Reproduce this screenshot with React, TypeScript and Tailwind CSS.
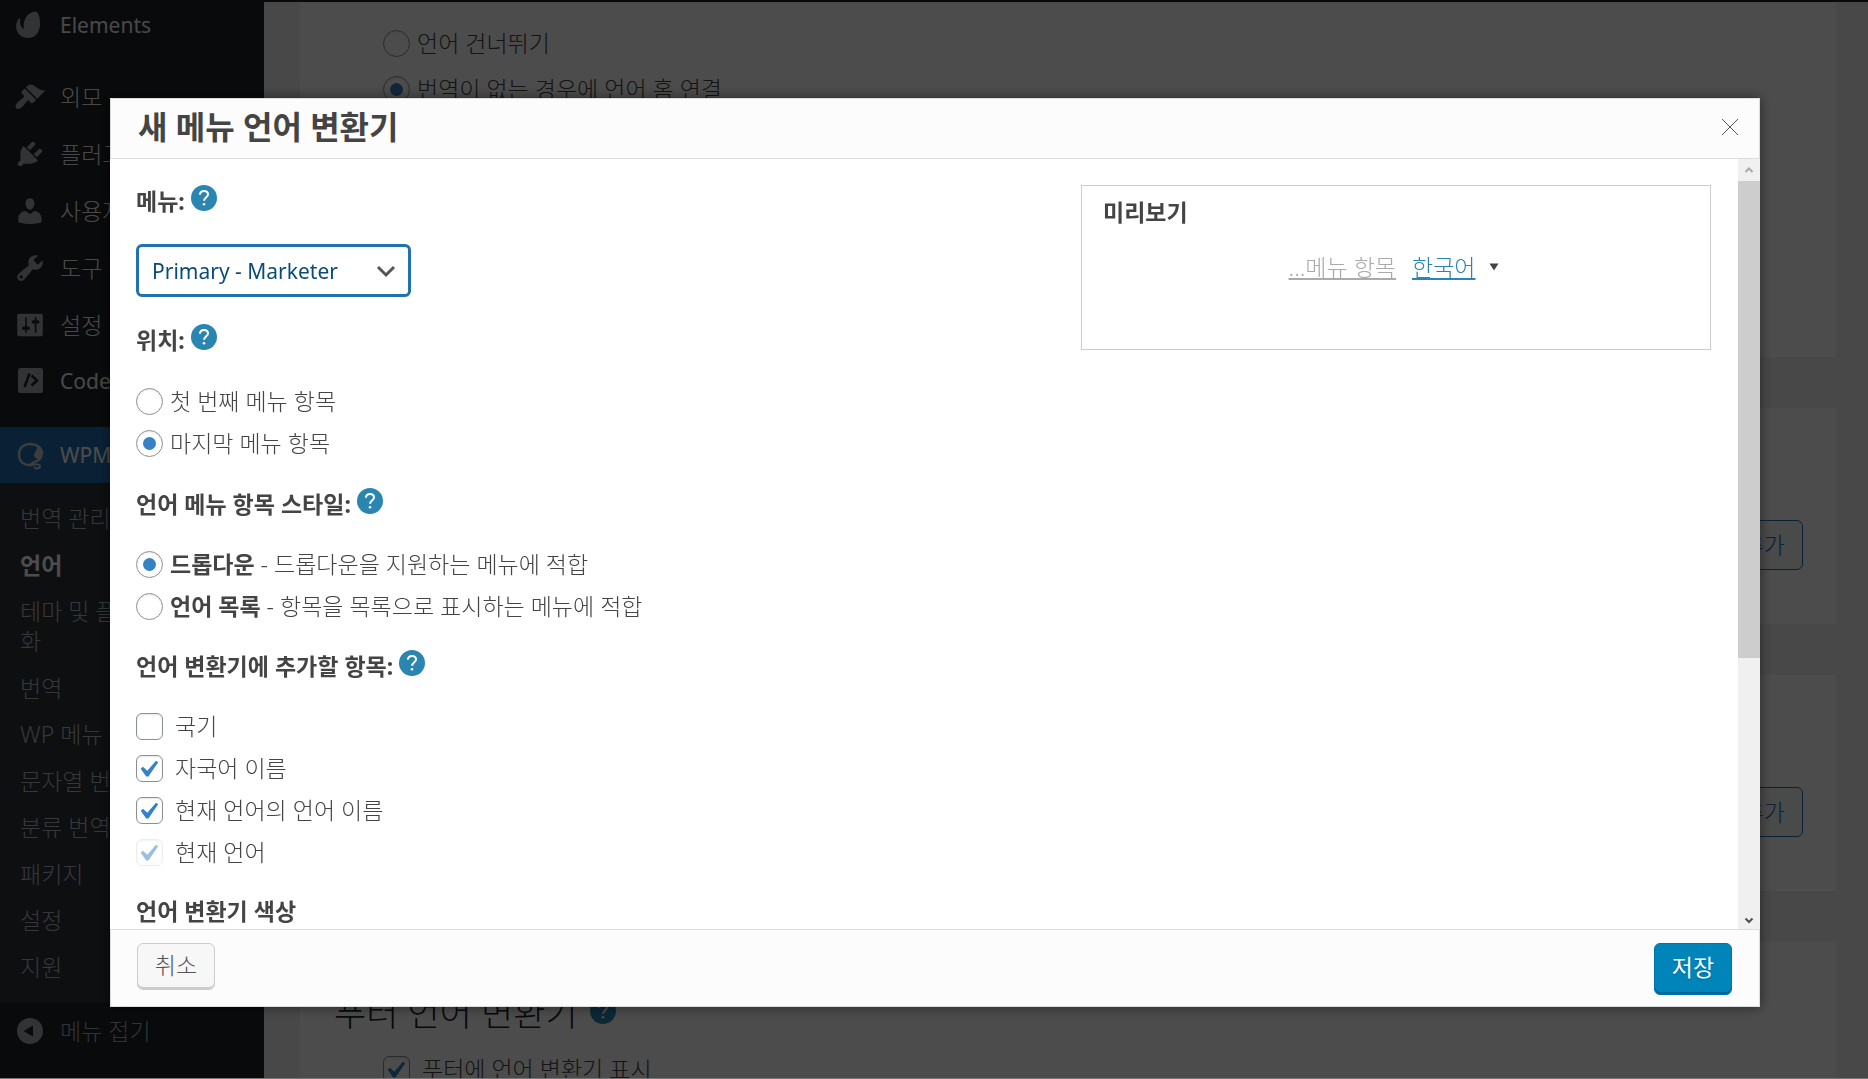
import { useState } from 'react';
import type { ReactNode } from 'react';

const icons = {
  appearance:
    'M14.48 11.06L7.41 3.99l1.5-1.5c.5-.56 2.3-.47 3.51.32 1.21.8 1.43 1.28 2.91 2.1 1.18.64 2.45 1.26 4.45.85zm-.71.71L6.7 4.7 4.93 6.47c-.39.39-.39 1.02 0 1.41l1.06 1.06c.39.39.39 1.03 0 1.42-.6.6-1.43 1.11-2.21 1.69-.35.26-.7.53-1.01.84C1.43 14.23.4 16.08 1.4 17.07c.99 1 2.84-.03 4.18-1.36.31-.31.58-.66.85-1.02.57-.78 1.08-1.61 1.69-2.21.39-.39 1.02-.39 1.41 0l1.06 1.06c.39.39 1.02.39 1.41 0z',
  plugins:
    'M13.11 4.36L9.87 7.6 8 5.73l3.24-3.24c.35-.34 1.05-.2 1.56.32.52.51.66 1.21.31 1.55zm-8 1.77l.91-1.12 9.01 9.01-1.19.84c-.71.71-2.63 1.16-3.82 1.16H6.14L4.9 17.26c-.59.59-1.54.59-2.12 0-.59-.58-.59-1.53 0-2.12l1.24-1.24v-3.88c0-1.13.4-3.19 1.09-3.89zm7.26 3.97l3.24-3.24c.34-.35 1.04-.21 1.55.31.52.51.66 1.21.31 1.55l-3.24 3.25z',
  users:
    'M10 9.25c-2.27 0-2.73-3.44-2.73-3.44C7 4.02 7.82 2 9.97 2c2.16 0 2.98 2.02 2.71 3.81 0 0-.41 3.44-2.68 3.44zm0 2.57L12.72 10c2.39 0 4.52 2.33 4.52 4.53v2.49s-3.65 1.13-7.24 1.13c-3.65 0-7.24-1.13-7.24-1.13v-2.49c0-2.25 1.94-4.48 4.47-4.48z',
  tools:
    'M16.68 9.77c-1.34 1.34-3.3 1.67-4.95.99l-5.41 6.52c-.99.99-2.59.99-3.58 0s-.99-2.59 0-3.57l6.52-5.42c-.68-1.65-.35-3.61.99-4.95 1.28-1.28 3.12-1.62 4.72-1.06l-2.89 2.89 2.82 2.82 2.86-2.87c.53 1.58.18 3.39-1.08 4.65zM3.81 16.21c.4.39 1.04.39 1.43 0 .4-.4.4-1.04 0-1.43-.39-.4-1.03-.4-1.43 0-.39.39-.39 1.03 0 1.43z',
  settings:
    'M18 16V4c0-.55-.45-1-1-1H3c-.55 0-1 .45-1 1v12c0 .55.45 1 1 1h14c.55 0 1-.45 1-1zM8 11h1c.55 0 1 .45 1 1s-.45 1-1 1H8v1.5c0 .28-.22.5-.5.5s-.5-.22-.5-.5V13H6c-.55 0-1-.45-1-1s.45-1 1-1h1V5.5c0-.28.22-.5.5-.5s.5.22.5.5V11zm5-2h-1c-.55 0-1-.45-1-1s.45-1 1-1h1V5.5c0-.28.22-.5.5-.5s.5.22.5.5V7h1c.55 0 1 .45 1 1s-.45 1-1 1h-1v5.5c0 .28-.22.5-.5.5s-.5-.22-.5-.5V9z',
};

const menuItems = [
  { label: '외모', icon: icons.appearance },
  { label: '플러그인', icon: icons.plugins },
  { label: '사용자', icon: icons.users },
  { label: '도구', icon: icons.tools },
  { label: '설정', icon: icons.settings },
];

const subItems = ['번역', 'WP 메뉴 동기화', '문자열 번역', '분류 번역', '패키지', '설정', '지원'];

const DashIcon = ({ d }: { d: string }) => (
  <svg viewBox="0 0 20 20" className="size-8 shrink-0 fill-[#a7aaad]">
    <path d={d} />
  </svg>
);

const Sidebar = () => (
  <nav className="w-[264px] shrink-0 bg-[#1d2327] text-[23px] leading-[30px] whitespace-nowrap">
    <a href="#" className="flex h-[46px] items-center gap-[14px] pl-[14px] text-[21px] font-normal text-[#f0f0f1]">
      <svg viewBox="0 0 32 32" className="size-8 shrink-0 fill-[#a7aaad]">
        <path d="M21.5 2.4C24 2.4 26.4 8 26 15.500C25.600 23.500 21.500 29 14.500 29C8 29 3.200 25 2.300 19.500C1.700 15.800 3.100 11.500 5 9.600C6 9 6.500 9.500 6.100 10.600C5.400 14 6.500 17.500 8.900 19.500C9.500 20 9.900 19.600 9.800 18.900C8.800 10.500 13.500 3.200 21.500 2.400Z" />
      </svg>
      <span>Elements</span>
    </a>
    <div className="mt-5">
      {menuItems.map((item) => (
        <a key={item.label} href="#" className="flex h-[57px] items-center gap-[14px] pl-[14px] text-[#f0f0f1]">
          <DashIcon d={item.icon} />
          <span>{item.label}</span>
        </a>
      ))}
      <a href="#" className="flex h-[55px] items-center gap-[14px] pl-[14px] text-[21px] font-normal text-[#f0f0f1]">
        <svg viewBox="0 0 32 32" className="size-8 shrink-0">
          <rect x="4" y="3" width="25" height="25" rx="2.500" className="fill-[#a7aaad]" />
          <path d="M15.500 8.500l-5 13.500M17.500 10.500l5.500 5-5.500 5" className="fill-none stroke-[#1d2327] stroke-[2.500]" />
        </svg>
        <span>Code Snippets</span>
      </a>
    </div>
    <a href="#" className="mt-[19px] flex h-14 items-center gap-[14px] bg-[#2271b1] pl-[14px] text-[21px] font-normal text-white">
      <svg viewBox="0 0 32 32" className="size-8 shrink-0 fill-none stroke-[#c8ccd0]">
        <path d="M19.500 25.500C10 28 5 22 5 15.500C5 8.500 10 5 16 5C22.500 5 28 8.500 28.200 15" className="stroke-[2.500]" />
        <path d="M23.500 8C27.500 9.500 29 13.500 28 17.500C26.500 21 20.500 20 20.500 16C20.500 13 23.500 12 23.500 8Z" className="fill-[#c8ccd0]" />
        <path d="M27 18.500C25 23 18 22.500 17.500 24.500C18 26.500 25 23.500 26 27C26 30 20.500 30.500 20.500 27.500" className="stroke-2" />
      </svg>
      <span>WPML</span>
    </a>
    <div className="bg-[#2c3338] pt-5 pb-[21px]">
      <ul className="flex h-[479px] flex-col justify-between pl-[20px] text-[#b5bac0]">
        <li>
          <a href="#">번역 관리</a>
        </li>
        <li>
          <a href="#" className="font-bold text-white">
            언어
          </a>
        </li>
        <li>
          <a href="#">
            테마 및 플러그인 현지
            <br />화
          </a>
        </li>
        {subItems.map((label) => (
          <li key={label}>
            <a href="#">{label}</a>
          </li>
        ))}
      </ul>
    </div>
    <button type="button" className="flex h-[55px] w-full items-center gap-[14px] pl-[14px] text-[#a7aaad]">
      <svg viewBox="0 0 32 32" className="size-8 shrink-0">
        <circle cx="16" cy="16" r="13" className="fill-[#a7aaad]" />
        <path d="M19 10.500v11L9.500 16z" className="fill-[#1d2327]" />
      </svg>
      <span>메뉴 접기</span>
    </button>
  </nav>
);

const HelpIcon = () => (
  <svg viewBox="0 0 26 26" className="size-[26px] shrink-0">
    <circle cx="13" cy="13" r="13" className="fill-[#2a85b0]" />
    <path d="M8.900 9.800C9 7.200 10.700 5.900 13 5.900C15.400 5.900 17 7.300 17 9.400C17 12.200 13.300 12.400 13.100 15.800" className="fill-none stroke-white stroke-2" />
    <circle cx="13" cy="19.200" r="1.300" className="fill-white" />
  </svg>
);

interface ChoiceProps {
  children: ReactNode;
  name?: string;
  defaultChecked?: boolean;
  disabled?: boolean;
}

const Radio = ({ children, name, defaultChecked }: ChoiceProps) => (
  <label className="flex h-[42px] w-fit items-center gap-[7px]">
    <input
      type="radio"
      name={name}
      defaultChecked={defaultChecked}
      className="grid size-[27px] shrink-0 appearance-none place-items-center rounded-full border border-[#8c8f94] bg-white shadow-[inset_0_1px_2px_rgba(0,0,0,0.1)] before:size-[13px] before:rounded-full checked:before:bg-[#3582c4]"
    />
    <span>{children}</span>
  </label>
);

const Checkbox = ({ children, defaultChecked, disabled }: ChoiceProps) => (
  <label className="flex h-[42px] w-fit items-center gap-3">
    <span className={disabled ? 'grid shrink-0 opacity-50' : 'grid shrink-0'}>
      <input
        type="checkbox"
        defaultChecked={defaultChecked}
        disabled={disabled}
        className="peer col-start-1 row-start-1 size-[27px] appearance-none rounded-md border border-[#8c8f94] bg-white shadow-[inset_0_1px_2px_rgba(0,0,0,0.1)] disabled:border-[#dcdcde]"
      />
      <svg viewBox="3 1.5 16 16" className="pointer-events-none invisible col-start-1 row-start-1 size-[27px] fill-[#3582c4] peer-checked:visible">
        <path d="M14.830 4.890l1.340.940-5.810 8.380H9.020L5.780 9.670l1.340-1.250 2.570 2.400z" />
      </svg>
    </span>
    <span>{children}</span>
  </label>
);

const SectionTitle = ({ children, help = true }: { children: ReactNode; help?: boolean }) => (
  <div className="flex h-8 gap-[6px]">
    <h3 className="pt-[1px] leading-[30px] font-bold">{children}</h3>
    {help && (
      <button type="button" aria-label="도움말" className="self-start">
        <HelpIcon />
      </button>
    )}
  </div>
);

const AddCard = () => (
  <section className="flex h-[216px] shrink-0 items-end justify-end bg-white pr-[33px] pb-[54px]">
    <button type="button" className="h-[50px] rounded-md border border-[#2271b1] bg-[#f6f7f7] px-[17px] text-[#2271b1]">
      새 언어 변환기 추가
    </button>
  </section>
);

const Background = () => (
  <main className="flex min-w-0 flex-1 flex-col gap-[51px] overflow-hidden bg-[#f0f0f1] pr-8 pl-9">
    <section className="h-[355px] shrink-0 bg-white pt-5 pl-[83px]">
      <Radio name="missing">언어 건너뛰기</Radio>
      <div className="mt-1">
        <Radio name="missing" defaultChecked>
          번역이 없는 경우에 언어 홈 연결
        </Radio>
      </div>
    </section>
    <AddCard />
    <AddCard />
    <section className="h-[240px] shrink-0 bg-white pt-[48px] pl-[34px]">
      <div className="flex gap-3">
        <h2 className="text-[35px] leading-[46px] text-[#1d2327]">푸터 언어 변환기</h2>
        <span className="pt-2">
          <HelpIcon />
        </span>
      </div>
      <div className="mt-3 pl-[49px]">
        <Checkbox defaultChecked>푸터에 언어 변환기 표시</Checkbox>
      </div>
    </section>
  </main>
);

const ScrollTrack = () => (
  <div className="flex w-[22px] shrink-0 flex-col bg-[#f0f0f0]">
    <div className="grid h-[22px] place-items-center">
      <svg viewBox="0 0 10 10" className="size-[10px] fill-none stroke-[#a8a8a8] stroke-2">
        <path d="M1.500 7L5 3.500L8.500 7" />
      </svg>
    </div>
    <div className="h-[62%] bg-[#cdcdcd]" />
    <div className="mt-auto grid h-[18px] place-items-center">
      <svg viewBox="0 0 10 10" className="size-[10px] fill-none stroke-[#505050] stroke-2">
        <path d="M1.500 3.500L5 7L8.500 3.500" />
      </svg>
    </div>
  </div>
);

const SwitcherDialog = ({ onClose }: { onClose: () => void }) => (
  <div role="dialog" aria-labelledby="dialog-title" className="flex min-w-0 flex-1 flex-col bg-white shadow-[0_0_12px_rgba(0,0,0,0.5)]">
    <header className="flex h-[61px] shrink-0 items-center justify-between border border-[#dddddd] bg-[#fcfcfc] pr-[20px] pb-[3px] pl-[27px]">
      <h2 id="dialog-title" className="text-[32px] leading-[44px] font-bold">
        새 메뉴 언어 변환기
      </h2>
      <button type="button" aria-label="닫기" onClick={onClose}>
        <svg viewBox="0 0 18 18" className="size-[18px] stroke-[#555555]">
          <path d="M1 1L17 17M17 1L1 17" />
        </svg>
      </button>
    </header>
    <div className="flex min-h-0 flex-1">
      <div className="flex min-w-0 flex-1 items-start justify-between overflow-hidden pt-[26px] pr-[27px] pl-[26px]">
        <form className="flex flex-col">
          <SectionTitle>
            <label htmlFor="menu">메뉴:</label>
          </SectionTitle>
          <div className="mt-[27px] grid w-[275px] items-center">
            <select
              id="menu"
              className="col-start-1 row-start-1 h-[53px] appearance-none rounded-md border-3 border-[#2271b1] bg-white pl-[13px] text-[21px] font-normal text-[#0a4b78]"
            >
              <option>Primary - Marketer</option>
            </select>
            <svg viewBox="0 0 20 20" className="pointer-events-none col-start-1 row-start-1 mr-[15px] size-5 justify-self-end fill-none stroke-[#555555] stroke-3">
              <path d="M2 6l8 8 8-8" />
            </svg>
          </div>
          <div className="mt-[27px]">
            <SectionTitle>위치:</SectionTitle>
          </div>
          <div className="mt-6">
            <Radio name="position">첫 번째 메뉴 항목</Radio>
            <Radio name="position" defaultChecked>
              마지막 메뉴 항목
            </Radio>
          </div>
          <div className="mt-6">
            <SectionTitle>언어 메뉴 항목 스타일:</SectionTitle>
          </div>
          <div className="mt-[23px]">
            <Radio name="style" defaultChecked>
              <b className="font-bold">드롭다운</b> - 드롭다운을 지원하는 메뉴에 적합
            </Radio>
            <Radio name="style">
              <b className="font-bold">언어 목록</b> - 항목을 목록으로 표시하는 메뉴에 적합
            </Radio>
          </div>
          <div className="mt-[23px]">
            <SectionTitle>언어 변환기에 추가할 항목:</SectionTitle>
          </div>
          <div className="mt-[23px]">
            <Checkbox>국기</Checkbox>
            <Checkbox defaultChecked>자국어 이름</Checkbox>
            <Checkbox defaultChecked>현재 언어의 언어 이름</Checkbox>
            <Checkbox defaultChecked disabled>
              현재 언어
            </Checkbox>
          </div>
          <div className="mt-[22px]">
            <SectionTitle help={false}>언어 변환기 색상</SectionTitle>
          </div>
        </form>
        <section className="h-[165px] w-[630px] border border-[#cccccc] px-[21px] pt-[11px]">
          <h3 className="leading-[30px] font-bold">미리보기</h3>
          <div className="mt-[25px] flex items-center justify-center gap-4 pr-1 leading-[30px]">
            <a href="#" className="text-[#aaaaaa] underline decoration-2 underline-offset-2">
              ...메뉴 항목
            </a>
            <div className="flex items-center gap-[14px]">
              <a href="#" className="text-[#2a85b0] underline decoration-2 underline-offset-2">
                한국어
              </a>
              <svg viewBox="0 0 10 8" className="h-2 w-[10px] fill-[#444444]">
                <path d="M0.500 0.500h9L5 7.500z" />
              </svg>
            </div>
          </div>
        </section>
      </div>
      <ScrollTrack />
    </div>
    <footer className="flex h-[78px] shrink-0 items-start justify-between border border-[#dddddd] bg-[#fcfcfc] pt-[13px] pr-[27px] pl-[26px]">
      <button
        type="button"
        onClick={onClose}
        className="h-[47px] w-[78px] rounded-md border border-[#cccccc] bg-[#f7f7f7] pb-1 text-[#555555] shadow-[inset_0_-2px_0_#cccccc]"
      >
        취소
      </button>
      <button
        type="button"
        className="h-[52px] w-[78px] rounded-md border border-[#0073aa] bg-[#0085ba] pb-1 font-normal text-white shadow-[inset_0_-2px_0_#006799] text-shadow-[0_1px_2px_#006799]"
      >
        저장
      </button>
    </footer>
  </div>
);

const App = () => {
  const [open, setOpen] = useState(true);

  return (
    <div className="h-screen overflow-hidden border-t-2 border-[#1d2327] font-['Noto_Sans','Noto_Sans_CJK_KR',sans-serif] text-[23px] leading-[30px] font-light text-[#444444]">
      <div className="flex h-full">
        <Sidebar />
        <Background />
      </div>
      {open && (
        <div className="fixed inset-0 flex border-b border-[#777777] bg-black/70 pt-[98px] pr-[108px] pb-[71px] pl-[110px]">
          <SwitcherDialog onClose={() => setOpen(false)} />
        </div>
      )}
    </div>
  );
};

export default App;
